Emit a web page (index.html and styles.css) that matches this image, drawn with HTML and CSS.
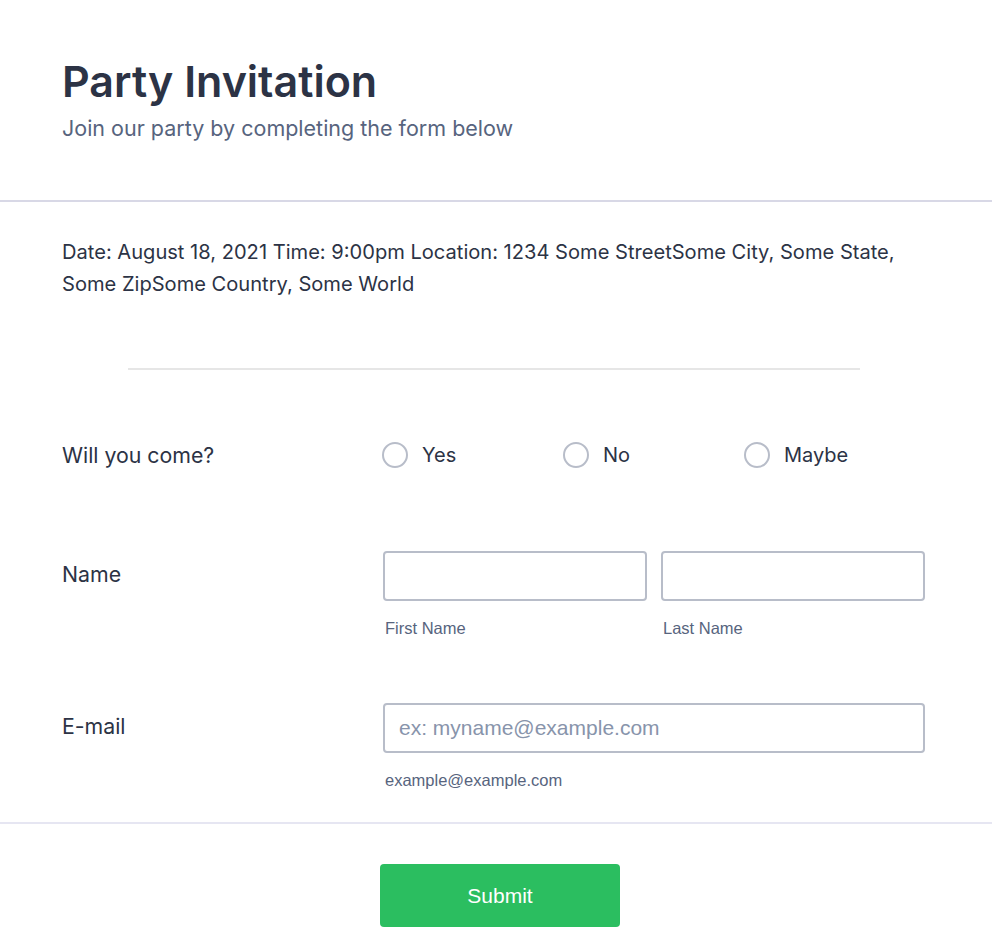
FILE: index.html
```html
<!DOCTYPE html>
<html lang="en">
<head>
<meta charset="utf-8">
<title>Party Invitation</title>
<link rel="stylesheet" href="styles.css">
</head>
<body>
<form class="form">
  <header class="form-header">
    <h1 class="form-title">Party Invitation</h1>
    <p class="form-subtitle">Join our party by completing the form below</p>
  </header>

  <section class="details">
    <p class="details-text">Date: August 18, 2021 Time: 9:00pm Location: 1234 Some StreetSome City, Some State, Some ZipSome Country, Some World</p>
  </section>

  <div class="divider-wrap"><div class="divider"></div></div>

  <div class="question question-radio">
    <div class="q-label">Will you come?</div>
    <div class="q-body radios">
      <label class="radio"><span class="radio-circle"></span><span class="radio-text">Yes</span></label>
      <label class="radio"><span class="radio-circle"></span><span class="radio-text">No</span></label>
      <label class="radio"><span class="radio-circle"></span><span class="radio-text">Maybe</span></label>
    </div>
  </div>

  <div class="question question-name">
    <div class="q-label q-label-offset">Name</div>
    <div class="q-body name-fields">
      <div class="field">
        <div class="input"></div>
        <div class="sublabel">First Name</div>
      </div>
      <div class="field">
        <div class="input"></div>
        <div class="sublabel">Last Name</div>
      </div>
    </div>
  </div>

  <div class="question question-email">
    <div class="q-label q-label-offset">E-mail</div>
    <div class="q-body">
      <div class="field">
        <div class="input"><span class="placeholder">ex: myname@example.com</span></div>
        <div class="sublabel">example@example.com</div>
      </div>
    </div>
  </div>

  <footer class="form-footer">
    <button type="button" class="submit">Submit</button>
  </footer>
</form>
</body>
</html>
```

FILE: styles.css
```css
html, body {
  margin: 0;
  padding: 0;
  background: #ffffff;
}

body {
  font-family: Inter, "Noto Sans", sans-serif;
  color: #2c3345;
}

.form {
  width: 992px;
}

.form-header {
  padding: 55px 62px 58px;
  border-bottom: 2px solid #d8d8e6;
}

.form-title {
  margin: 0;
  font-size: 43px;
  line-height: 52px;
  font-weight: 600;
  color: #2c3345;
}

.form-subtitle {
  margin: 7px 0 0;
  font-size: 21.5px;
  line-height: 28px;
  color: #57647e;
}

.details {
  padding: 34px 62px 0;
}

.details-text {
  margin: 0;
  font-size: 20.1px;
  line-height: 32px;
  color: #2c3345;
}

.divider-wrap {
  padding: 68px 0 0 128px;
}

.divider {
  width: 732px;
  height: 2px;
  background: #e6e6e6;
}

.question {
  display: flex;
  padding: 0 67px 0 62px;
}

.q-label {
  width: 321px;
  flex: none;
  font-size: 21.3px;
  line-height: 28px;
  color: #2c3345;
}

.q-label-offset {
  margin-top: 9px;
}

.q-body {
  flex: 1;
}

.question-radio {
  margin-top: 71px;
  align-items: center;
}

.radios {
  display: flex;
  align-items: center;
  margin-left: -1px;
}

.radio {
  display: flex;
  align-items: center;
  width: 181px;
  gap: 14px;
}

.radio-circle {
  box-sizing: border-box;
  width: 26px;
  height: 26px;
  border: 2px solid #b8bdc9;
  border-radius: 50%;
  flex: none;
}

.radio-text {
  font-size: 20px;
  line-height: 28px;
  color: #2c3345;
}

.question-name {
  margin-top: 82px;
}

.name-fields {
  display: flex;
  gap: 14px;
}

.field {
  flex: 1;
}

.input {
  box-sizing: border-box;
  height: 50px;
  border: 2px solid #b8bdc9;
  border-radius: 4px;
  display: flex;
  align-items: center;
  padding: 0 14px;
}

.placeholder {
  font-family: "Liberation Sans", Arial, sans-serif;
  font-size: 21px;
  color: #8894ab;
}

.sublabel {
  margin-top: 18px;
  padding-left: 2px;
  font-family: "Liberation Sans", Arial, sans-serif;
  font-size: 16.5px;
  line-height: 18px;
  color: #57647e;
}

.question-email {
  margin-top: 66px;
}

.form-footer {
  margin-top: 33px;
  border-top: 2px solid #e6e6f2;
  padding: 40px 0 13px;
  display: flex;
  justify-content: center;
}

.submit {
  width: 240px;
  height: 63px;
  border: none;
  border-radius: 4px;
  background: #2bbe60;
  color: #ffffff;
  font-family: "Liberation Sans", Arial, sans-serif;
  font-size: 21px;
  margin-left: 8px;
  cursor: pointer;
}
```
